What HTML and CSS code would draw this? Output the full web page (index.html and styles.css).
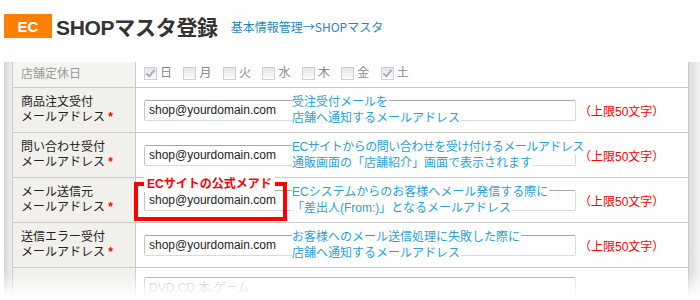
FILE: index.html
```html
<!doctype html>
<html>
	<head>
		<title>SHOPマスタ登録</title>
		<link rel="stylesheet" href="styles.css">
	</head>
	<body>
		<div class="head">
			<span class="ec">EC</span>
			<h1>SHOPマスタ登録</h1>
			<span class="crumb">基本情報管理→SHOPマスタ</span>
		</div>

		<div class="frame">
			<div class="shade-l"></div>
			<table class="form">
				<tr class="holiday">
					<td class="label">店舗定休日</td>
					<td class="value">
						<span class="day"><span class="cb on"></span>日</span>
						<span class="day"><span class="cb"></span>月</span>
						<span class="day"><span class="cb"></span>火</span>
						<span class="day"><span class="cb"></span>水</span>
						<span class="day"><span class="cb"></span>木</span>
						<span class="day"><span class="cb"></span>金</span>
						<span class="day"><span class="cb on"></span>土</span>
					</td>
				</tr>
				<tr>
					<td class="label">商品注文受付<br>メールアドレス <span class="req">*</span></td>
					<td class="value">
						<div class="field">
							<input class="mail" type="text" value="shop@yourdomain.com">
							<span class="note">（上限50文字）</span>
							<div class="tip"><span>受注受付メールを</span><span>店舗へ通知するメールアドレス</span></div>
						</div>
					</td>
				</tr>
				<tr>
					<td class="label">問い合わせ受付<br>メールアドレス <span class="req">*</span></td>
					<td class="value">
						<div class="field">
							<input class="mail" type="text" value="shop@yourdomain.com">
							<span class="note">（上限50文字）</span>
							<div class="tip"><span class="tight">ECサイトからの問い合わせを受け付けるメールアドレス</span><span>通販画面の「店舗紹介」画面で表示されます</span></div>
						</div>
					</td>
				</tr>
				<tr>
					<td class="label">メール送信元<br>メールアドレス <span class="req">*</span></td>
					<td class="value">
						<div class="field">
							<input class="mail" type="text" value="shop@yourdomain.com">
							<span class="note">（上限50文字）</span>
							<div class="mark"><span>ECサイトの公式メアド</span></div>
							<div class="tip"><span>ECシステムからのお客様へメール発信する際に</span><span>「差出人(From:)」となるメールアドレス</span></div>
						</div>
					</td>
				</tr>
				<tr>
					<td class="label">送信エラー受付<br>メールアドレス <span class="req">*</span></td>
					<td class="value">
						<div class="field">
							<input class="mail" type="text" value="shop@yourdomain.com">
							<span class="note">（上限50文字）</span>
							<div class="tip"><span>お客様へのメール送信処理に失敗した際に</span><span>店舗へ通知するメールアドレス</span></div>
						</div>
					</td>
				</tr>
				<tr class="last">
					<td class="label"></td>
					<td class="value">
						<input class="mail" type="text" placeholder="DVD,CD,本,ゲーム">
					</td>
				</tr>
			</table>
			<div class="shade-r"></div>
			<div class="fade"></div>
		</div>
	</body>
</html>
```

FILE: styles.css
```css
html, body {
	margin: 0;
	padding: 0;
	background: #fff;
	font-family: "Liberation Sans", "Noto Sans CJK JP", sans-serif;
}

/* title bar */
.head {
	display: flex;
	align-items: center;
	height: 24px;
	padding: 14px 0 0 4px;
}

.ec {
	width: 48px;
	height: 24px;
	display: flex;
	align-items: center;
	justify-content: center;
	background-color: #ff8000;
	color: #fff;
	font-weight: bold;
	font-size: 15px;
}

.head h1 {
	margin: 0 0 0 4px;
	font-size: 21px;
	font-weight: bold;
	color: #333;
	letter-spacing: -0.3px;
}

.crumb {
	margin-left: 13px;
	font-family: "Noto Sans CJK JP", sans-serif;
	font-size: 12px;
	color: #1f8abb;
}

/* form frame */
.frame {
	position: relative;
	display: flex;
	height: 238px;
	margin-top: 24px;
	padding-left: 4px;
	overflow: hidden;
}

.shade-l {
	width: 8px;
	background: linear-gradient(to right, #d6d6d6, #efefef);
}

.shade-r {
	width: 11px;
	background: linear-gradient(to right, #dcdcdc, #f3f3f3);
}

.fade {
	position: absolute;
	left: 0;
	right: 0;
	bottom: 0;
	height: 28px;
	background: linear-gradient(rgba(255, 255, 255, 0), #fff 90%);
}

table.form {
	width: 677px;
	border-collapse: collapse;
	table-layout: fixed;
	align-self: flex-start;
}

table.form td {
	border: 1px solid #cacaca;
	height: 44px;
	padding: 0;
}

table.form tr:first-child td { border-top: 0 none; }

table.form td.label {
	width: 114px;
	padding-left: 8px;
	background-color: #f1f0eb;
	color: #222;
	font-size: 12px;
	line-height: 15px;
}

table.form td.value { padding-left: 8px; }

.req {
	color: #f00;
	font-weight: bold;
}

/* closed days */
table.form .holiday td { height: 25px; }
table.form .holiday td.label { color: #999; background-color: #f4f4f1; }

.day {
	display: inline-flex;
	align-items: center;
	gap: 3px;
	margin-right: 7px;
	font-size: 12px;
	line-height: 14px;
	color: #888;
}

.cb {
	position: relative;
	width: 11px;
	height: 11px;
	border: 1px solid #cfcfcf;
	background: linear-gradient(#e6e6e6, #fbfbfb);
}

.cb.on::after {
	content: "";
	position: absolute;
	left: 3px;
	top: 0;
	width: 3px;
	height: 7px;
	border: solid #a6b0c4;
	border-width: 0 2px 2px 0;
	transform: rotate(40deg);
}

/* mail fields */
.field {
	position: relative;
	display: flex;
	align-items: center;
}

input.mail {
	width: 432px;
	height: 21px;
	box-sizing: border-box;
	margin: 0;
	padding: 0 4px;
	border: 1px solid #d3dbe2;
	border-top-color: #a8a8a8;
	border-left-color: #c4c4c4;
	border-radius: 2px;
	font: 12px "Liberation Sans", "Noto Sans CJK JP", sans-serif;
	color: #222;
}

input.mail::placeholder { color: #bbb; }

.note {
	margin-left: 3px;
	font-size: 12px;
	color: #f00;
}

.tip {
	position: absolute;
	left: 148px;
	top: 50%;
	transform: translateY(-50%);
	display: flex;
	flex-direction: column;
	align-items: flex-start;
	font-size: 12px;
	line-height: 16px;
	color: #2a9fd8;
}

.tip span {
	background-color: #fff;
	padding-right: 1px;
	white-space: nowrap;
}

.tip span.tight { letter-spacing: -0.5px; }

.mark {
	position: absolute;
	left: -10px;
	top: -8px;
	width: 145px;
	height: 31px;
	border: 4px solid #f00;
}

.mark span {
	position: absolute;
	left: 6px;
	top: -10px;
	padding: 0 3px;
	background-color: #fff;
	color: #f00;
	font-size: 12px;
	font-weight: bold;
	line-height: 16px;
	white-space: nowrap;
}

table.form .last td { height: 40px; vertical-align: top; }
.last input.mail { margin-top: 9px; }
```
